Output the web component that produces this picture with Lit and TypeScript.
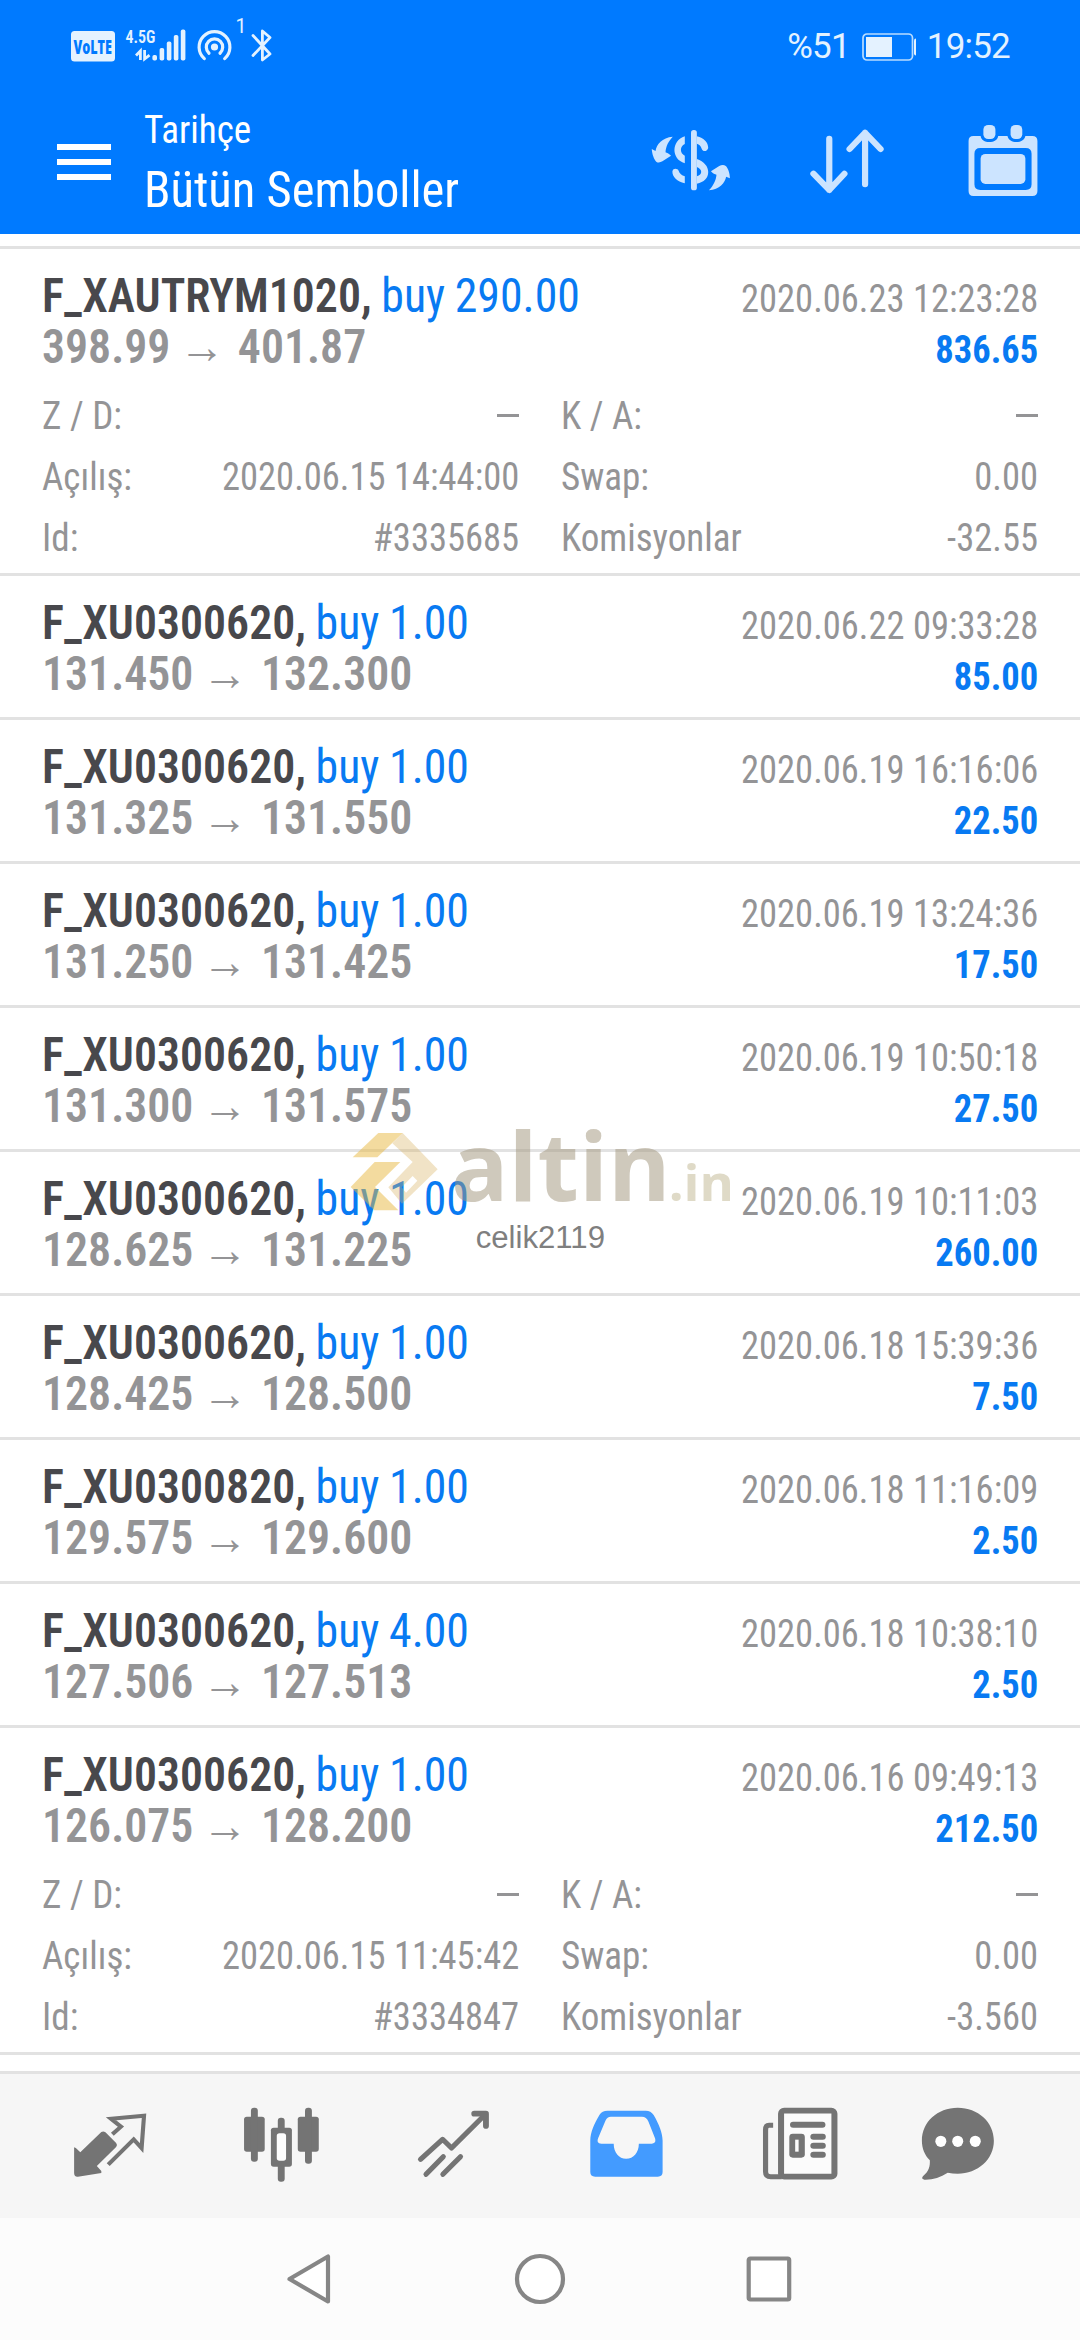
import { LitElement, html, css, svg } from "lit";
import { customElement, property } from "lit/decorators.js";

interface Deal {
  symbol: string;
  volume: string;
  open: string;
  close: string;
  time: string;
  profit: string;
  details?: { opened: string; id: string; swap: string; commission: string };
}

const DEALS: Deal[] = [
  { symbol: "F_XAUTRYM1020", volume: "290.00", open: "398.99", close: "401.87", time: "2020.06.23 12:23:28", profit: "836.65",
    details: { opened: "2020.06.15 14:44:00", id: "#3335685", swap: "0.00", commission: "-32.55" } },
  { symbol: "F_XU0300620", volume: "1.00", open: "131.450", close: "132.300", time: "2020.06.22 09:33:28", profit: "85.00" },
  { symbol: "F_XU0300620", volume: "1.00", open: "131.325", close: "131.550", time: "2020.06.19 16:16:06", profit: "22.50" },
  { symbol: "F_XU0300620", volume: "1.00", open: "131.250", close: "131.425", time: "2020.06.19 13:24:36", profit: "17.50" },
  { symbol: "F_XU0300620", volume: "1.00", open: "131.300", close: "131.575", time: "2020.06.19 10:50:18", profit: "27.50" },
  { symbol: "F_XU0300620", volume: "1.00", open: "128.625", close: "131.225", time: "2020.06.19 10:11:03", profit: "260.00" },
  { symbol: "F_XU0300620", volume: "1.00", open: "128.425", close: "128.500", time: "2020.06.18 15:39:36", profit: "7.50" },
  { symbol: "F_XU0300820", volume: "1.00", open: "129.575", close: "129.600", time: "2020.06.18 11:16:09", profit: "2.50" },
  { symbol: "F_XU0300620", volume: "4.00", open: "127.506", close: "127.513", time: "2020.06.18 10:38:10", profit: "2.50" },
  { symbol: "F_XU0300620", volume: "1.00", open: "126.075", close: "128.200", time: "2020.06.16 09:49:13", profit: "212.50",
    details: { opened: "2020.06.15 11:45:42", id: "#3334847", swap: "0.00", commission: "-3.560" } },
];

@customElement("status-bar")
class StatusBar extends LitElement {
  static styles = css`
    :host { display: flex; justify-content: space-between; height: 90px; padding: 0 70px 0 70px; color: #e4f2ff; font-family: Roboto, sans-serif; }
    .left { display: block; width: 204px; height: 80px; }
    .right { display: flex; align-items: center; font-size: 35px; line-height: 93px; height: 93px; }
    .pct, .clock { display: block; white-space: nowrap; letter-spacing: -0.8px; }
    .battery { display: block; width: 54px; height: 28px; margin: 0 11px 0 12px; }
  `;
  render() {
    return html`
      <svg class="left" viewBox="70 0 204 80" fill="#e4f2ff">
        <rect x="71" y="31" width="44" height="30.5" rx="3.5" />
        <text x="73.5" y="54" font-family="Open Sans" font-weight="800" font-size="19" fill="#007aff" textLength="38.5" lengthAdjust="spacingAndGlyphs">VoLTE</text>
        <text x="125.5" y="43" font-family="Roboto Condensed" font-weight="600" font-size="19" textLength="30" lengthAdjust="spacingAndGlyphs">4.5G</text>
        <g fill="none" stroke="#e4f2ff" stroke-width="2.8">
          <path d="M140.4 60V51L136 55.4M144.6 50V59L149.5 55.2" />
        </g>
        <rect x="152.4" y="55" width="4.6" height="5.6" rx="1.8" />
        <rect x="159.6" y="48" width="4.6" height="12.6" rx="1.8" />
        <rect x="166.8" y="41.6" width="4.6" height="19" rx="1.8" />
        <rect x="173.8" y="35" width="4.6" height="25.6" rx="1.8" />
        <rect x="180.8" y="29.6" width="4.6" height="31" rx="1.8" />
        <circle cx="214.5" cy="47" r="3.6" />
        <g fill="none" stroke="#e4f2ff" stroke-width="3.2" stroke-linecap="round">
          <path d="M204.3 58.6A15.4 15.4 0 1 1 224.7 58.6" />
          <path d="M209 53.2A8.2 8.2 0 1 1 220 53.2" />
          <path d="M253 35.5L270 54L262.4 60V31L270 37.5L253 55.5" stroke-width="2.8" stroke-linejoin="round" />
        </g>
        <text x="235.5" y="33" font-family="Roboto" font-size="19.5">1</text>
      </svg>
      <div class="right">
        <span class="pct">%51</span>
        <svg class="battery" viewBox="0 0 54 28">
          <rect x="1" y="1" width="49.5" height="26" rx="4" fill="none" stroke="#b8dcff" stroke-width="1.7" />
          <rect x="4" y="4" width="26" height="20" fill="#e4f2ff" />
          <rect x="52" y="5.5" width="5" height="17" rx="2" fill="#e4f2ff" />
        </svg>
        <span class="clock">19:52</span>
      </div>
    `;
  }
}

@customElement("title-bar")
class TitleBar extends LitElement {
  static styles = css`
    :host { display: flex; height: 144px; padding: 0 35.5px 0 57px; color: #fff; font-family: "Roboto Condensed", Roboto, sans-serif; }
    .menu { display: flex; flex-direction: column; gap: 9px; width: 54px; padding-top: 54px; }
    .bar { height: 6px; background: #fff; }
    .titles { flex: 1; padding-left: 33px; }
    .small, .large { transform-origin: left; white-space: nowrap; }
    .small { font-size: 39px; line-height: 46px; padding-top: 17px; transform: scaleX(0.95); }
    .large { font-size: 49.5px; line-height: 58px; padding-top: 8px; transform: scaleX(0.981); }
    .icons { display: flex; gap: 72px; padding-top: 32px; }
    .icon { display: block; width: 84px; height: 76.67px; fill: #cce4ff; stroke: none; }
    .line { fill: none; stroke: #cce4ff; stroke-width: 18; stroke-linecap: round; stroke-linejoin: round; }
  `;
  render() {
    return html`
      <div class="menu"><div class="bar"></div><div class="bar"></div><div class="bar"></div></div>
      <div class="titles">
        <div class="small">Tarihçe</div>
        <div class="large">Bütün Semboller</div>
      </div>
      <div class="icons">
        <svg class="icon" viewBox="314 366 244 230" preserveAspectRatio="none">
          <path d="M383 410C352 413 336 432 333 453L322 447C323 464 329 478 335 485C340 489 347 488 353 484L378 467C371 460 366 459 362 457C363 438 371 423 383 410Z" />
          <path d="M488 571C519 568 535 548 538 530L549 535C549 518 543 504 537 498C531 493 524 495 518 498L494 514C500 521 505 523 510 524C509 541 500 558 488 571Z" />
          <path d="M418 409V432C403 439 403 460 418 467V490C378 478 378 422 418 409Z" />
          <path d="M382 514C384 503 397 505 400 512C403 521 409 526 418 529V550C396 545 381 531 382 514Z" />
          <path d="M453 409C474 414 486 428 486 444C483 456 470 456 467 446C465 438 460 433 453 431Z" />
          <path fill-rule="evenodd" d="M453 477C474 485 486 499 486 516C486 534 474 547 453 551ZM453 501V529C470 524 470 508 453 501Z" />
          <rect x="436" y="390" width="17" height="181" rx="8" />
        </svg>
        <svg class="icon" viewBox="766.5 366 244 230" preserveAspectRatio="none">
          <path class="line" d="M837 416V570M791 521L837 570L881 521M941 553V398M896 447L941 398L986 447" />
        </svg>
        <svg class="icon" viewBox="1221 366 244 230" preserveAspectRatio="none">
          <path fill-rule="evenodd" d="M1257 408H1278C1280 420 1290 426 1303 426C1317 426 1327 420 1329 408H1356C1359 420 1369 426 1382 426C1395 426 1405 420 1408 408H1428Q1443 408 1443 423V573Q1443 588 1428 588H1257Q1243 588 1243 573V423Q1243 408 1257 408ZM1277 444Q1260 444 1260 461V553Q1260 570 1277 570H1409Q1426 570 1426 553V461Q1426 444 1409 444Z" />
          <rect x="1278" y="462" width="130" height="90" rx="14" />
          <rect x="1286" y="375" width="35" height="42" rx="14" />
          <rect x="1365" y="375" width="34" height="42" rx="14" />
        </svg>
      </div>
    `;
  }
}

@customElement("deal-row")
class DealRow extends LitElement {
  @property({ attribute: false }) deal!: Deal;
  static styles = css`
    :host { display: block; border-top: 3px solid #e2e2e2; height: 119px; padding: 22px 42px 0; font-family: "Roboto Condensed", Roboto, sans-serif; color: #949496; }
    :host([expanded]) { height: 302px; }
    .head { display: flex; justify-content: space-between; height: 102px; line-height: 51px; white-space: nowrap; }
    .left { font-size: 47.5px; font-weight: 600; transform: scaleX(0.965); transform-origin: left; }
    .symbol { color: #48484c; }
    .deal { color: #087af2; font-weight: 400; margin-left: -1px; }
    .deal, .symbol { word-spacing: -1px; }
    .prices { display: flex; }
    .arrow { margin: 0 13.5px 0 9px; }
    .right { padding-top: 3px; font-size: 39px; text-align: right; font-weight: 380; transform: scaleX(0.937); transform-origin: right; }
    .profit { color: #087af2; font-weight: 700; }
    .details { display: grid; grid-template-columns: 1fr 1fr; column-gap: 42px; margin-top: 13px; font-size: 39px; font-weight: 380; line-height: 61px; white-space: nowrap; }
    .item { display: flex; justify-content: space-between; }
    .label { transform: scaleX(0.95); transform-origin: left; }
    .value { transform: scaleX(0.937); transform-origin: right; }
    .dash { width: 22px; height: 3px; margin-top: 28px; background: #949496; }
  `;
  private item(label: string, value: string) {
    return html`<div class="item"><span class="label">${label}</span>${value
      ? html`<span class="value">${value}</span>`
      : html`<span class="dash"></span>`}</div>`;
  }
  render() {
    const d = this.deal;
    return html`
      <div class="head">
        <div class="left">
          <div><span class="symbol">${d.symbol},</span> <span class="deal">buy ${d.volume}</span></div>
          <div class="prices"><span>${d.open}</span><span class="arrow">→</span><span>${d.close}</span></div>
        </div>
        <div class="right">
          <div>${d.time}</div>
          <div class="profit">${d.profit}</div>
        </div>
      </div>
      ${d.details
        ? html`<div class="details">
            ${this.item("Z / D:", "")}${this.item("K / A:", "")}
            ${this.item("Açılış:", d.details.opened)}${this.item("Swap:", d.details.swap)}
            ${this.item("Id:", d.details.id)}${this.item("Komisyonlar", d.details.commission)}
          </div>`
        : null}
    `;
  }
}

@customElement("tab-bar")
class TabBar extends LitElement {
  static styles = css`
    :host { display: flex; gap: 72px; height: 114px; padding: 30px 0 0 60px; border-top: 3px solid #e2e2e2; background: #f6f6f6; }
    .icon { display: block; width: 100px; height: 80px; fill: #747474; }
    .on { fill: #439bff; }
    .line { fill: none; stroke: #747474; stroke-linecap: round; stroke-linejoin: round; }
    .butt { stroke-linecap: butt; stroke-linejoin: miter; }
  `;
  private icon(x: number, body: unknown, on = false) {
    return html`<svg class="icon ${on ? "on" : ""}" viewBox="${x} 190 290.4 240" preserveAspectRatio="none">${body}</svg>`;
  }
  render() {
    return html`
      ${this.icon(174, svg`
        <path d="M294 274Q300 270 306 275L337 307Q342 313 337 319L281 376L294 391V397L226 408Q215 409 215 397V320L220 322L233 335Z" />
        <path class="line butt" stroke-width="12" d="M326 281L351 258L322 234L418 225L411 322L388 296L314 372" />`)}
      ${this.icon(674, svg`
        <rect x="709" y="228" width="60" height="105" rx="8" /><rect x="729" y="201" width="20" height="162" rx="9" />
        <rect x="865" y="228" width="61" height="105" rx="8" /><rect x="886" y="201" width="20" height="168" rx="9" />
        <rect x="787" y="261" width="61" height="117" rx="8" /><rect x="807" y="231" width="20" height="192" rx="9" />
        <rect x="804" y="278" width="27" height="82" rx="8" fill="#fcfcfc" />`)}
      ${this.icon(1173, svg`
        <path class="line" stroke-width="15" d="M1221 356L1285 296L1311 322L1408 222M1237 401L1287 348M1286 401L1337 348" />
        <path class="line" stroke-width="17" d="M1377 219H1411V256" />`)}
      ${this.icon(104.5, svg`
        <path fill-rule="evenodd" d="M196 210H307Q322 210 330 223C345 250 356 277 356 300V394Q356 408 342 408H160Q146 408 146 394V300C146 275 158 247 173 222Q180 210 196 210ZM206 228Q195 228 190 240L169 292Q162 308 178 309H214C214 335 229 354 250 354C272 354 287 335 287 309H325Q339 308 334 293L315 243Q309 228 296 228Z" />`, true)}
      ${this.icon(604, svg`
        <rect x="700" y="210" width="155" height="198" rx="9" fill="#fbfbfb" stroke="#747474" stroke-width="17.5" />
        <path class="line butt" stroke-width="15" d="M677 254H665Q655 254 655 268V393Q655 408 670 408H702" />
        <path class="line" stroke-width="18" d="M735 252H820M794 288H821M794 315H821M794 342H821" />
        <rect x="724" y="279" width="45" height="72" rx="10" /><rect x="741" y="297" width="10" height="36" fill="#fbfbfb" />`)}
      ${this.icon(1103.5, svg`
        <path d="M1213 201C1272 201 1318 244 1318 300C1318 356 1271 399 1213 399Q1198 399 1184 396C1162 410 1140 418 1116 417Q1106 415 1112 407C1130 392 1133 376 1132 359C1117 343 1109 323 1109 300C1109 244 1154 201 1213 201Z" />
        <ellipse cx="1164" cy="302" rx="16" ry="17" fill="#fff" /><ellipse cx="1213" cy="302" rx="16" ry="17" fill="#fff" /><ellipse cx="1264" cy="302" rx="16" ry="17" fill="#fff" />`)}
    `;
  }
}

@customElement("system-nav")
class SystemNav extends LitElement {
  static styles = css`
    :host { display: flex; justify-content: center; align-items: center; gap: 177px; height: 122px; background: #fcfcfc; }
    .key { display: block; width: 52px; height: 52px; fill: #fff; stroke: #868686; stroke-width: 4.2; stroke-linejoin: round; }
  `;
  render() {
    return html`
      <svg class="key" viewBox="0 0 52 52"><path d="M43 3.5V48.5L4.5 26Z" /></svg>
      <svg class="key" viewBox="0 0 52 52"><circle cx="26" cy="26" r="23" /></svg>
      <svg class="key" viewBox="0 0 52 52"><rect x="5.7" y="5.5" width="40.5" height="41" rx="1.5" /></svg>
    `;
  }
}

@customElement("site-mark")
class SiteMark extends LitElement {
  static styles = css`
    :host { display: block; }
    .mark { display: block; width: 390px; height: 130px; overflow: visible; }
  `;
  render() {
    return html`
      <svg class="mark" viewBox="90 75 1170 390">
        <g fill="#e8b840" fill-opacity="0.5">
          <path d="M175 99H248L172 172H98Z" />
          <path d="M164 186H241L165 261L235 331H163L92 261Z" />
        </g>
        <path fill="#d8b260" fill-opacity="0.36" fill-rule="evenodd" d="M248 99L353 208L246 311L205 262L278 186L217 130ZM245 262L278 228L292 242L258 278Z" />
        <text x="393" y="303" font-family="Open Sans" font-weight="700" font-size="287" fill="#9f9379" fill-opacity="0.5" textLength="659" lengthAdjust="spacingAndGlyphs">altin</text>
        <text x="1046" y="303" font-family="Open Sans" font-weight="700" font-size="152" fill="#c0b58f" fill-opacity="0.5" textLength="196" lengthAdjust="spacingAndGlyphs">.in</text>
        <text x="467" y="443" font-family="Liberation Sans" font-size="92" fill="#7f7f7f" textLength="388" lengthAdjust="spacingAndGlyphs">celik2119</text>
      </svg>
    `;
  }
}

@customElement("app-root")
class AppRoot extends LitElement {
  static styles = css`
    :host { display: block; }
    .page { position: relative; display: flex; flex-direction: column; width: 1080px; height: 2340px; overflow: hidden; background: #fff; }
    .top { height: 234px; background: #007aff; }
    .list { flex: 1; padding-top: 12px; }
    .end { border-top: 3px solid #e2e2e2; }
    .mark { position: absolute; left: 350px; top: 1125px; }
  `;
  render() {
    return html`
      <div class="page">
        <div class="top"><status-bar></status-bar><title-bar></title-bar></div>
        <div class="list">
          ${DEALS.map((d) => html`<deal-row .deal=${d} ?expanded=${!!d.details}></deal-row>`)}
          <div class="end"></div>
        </div>
        <tab-bar></tab-bar>
        <system-nav></system-nav>
        <site-mark class="mark"></site-mark>
      </div>
    `;
  }
}
